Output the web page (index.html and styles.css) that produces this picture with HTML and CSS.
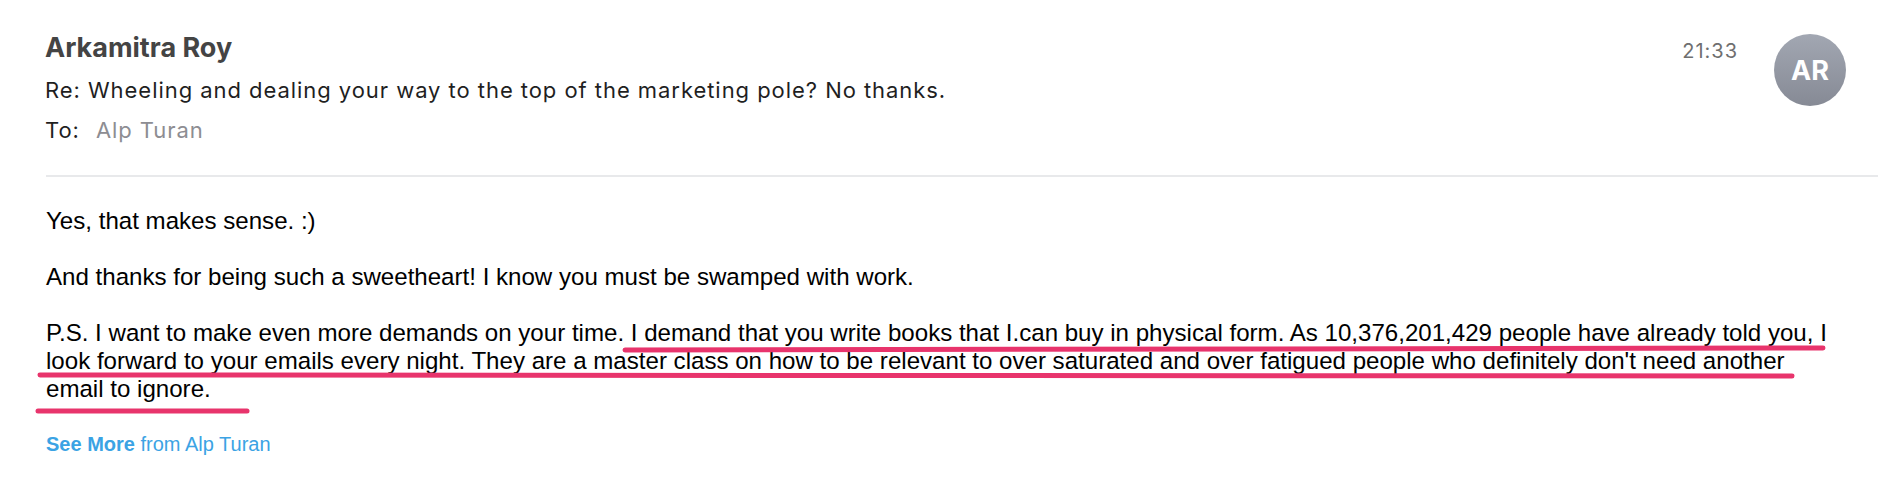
FILE: index.html
```html
<!DOCTYPE html>
<html>
<head>
<meta charset="utf-8">
<link rel="stylesheet" href="styles.css">
</head>
<body>
<div class="mail">
  <header class="head">
    <div class="meta">
      <div class="sender">Arkamitra Roy</div>
      <div class="subject">Re: Wheeling and dealing your way to the top of the marketing pole? No thanks.</div>
      <div class="to"><span class="to-label">To:</span><span class="to-name">Alp Turan</span></div>
    </div>
    <div class="side">
      <div class="time">21:33</div>
      <div class="avatar">AR</div>
    </div>
  </header>
  <div class="rule"></div>
  <div class="body">
    <p>Yes, that makes sense. :)</p>
    <p>And thanks for being such a sweetheart! I know you must be swamped with work.</p>
    <p>P.S. I want to make even more demands on your time. I demand that you write books that I.can buy in physical form. As 10,376,201,429 people have already told you, I look forward to your emails every night. They are a master class on how to be relevant to over saturated and over fatigued people who definitely don't need another email to ignore.</p>
    <div class="more"><span class="more-b">See More</span> from Alp Turan</div>
  </div>
  <svg class="marks" width="1878" height="488" viewBox="0 0 1878 488">
    <g stroke="#e8346c" stroke-width="5" stroke-linecap="round" fill="none">
      <line x1="625" y1="350" x2="1823" y2="348"/>
      <line x1="40" y1="375" x2="1792" y2="376"/>
      <line x1="38" y1="411" x2="247" y2="411"/>
    </g>
  </svg>
</div>
</body>
</html>
```
FILE: styles.css
```css
html, body {
  margin: 0;
  padding: 0;
  background: #ffffff;
}
.mail {
  position: relative;
  width: 1878px;
  height: 488px;
  overflow: hidden;
}
.head {
  display: flex;
  justify-content: space-between;
  align-items: flex-start;
  padding: 31px 32px 0 45px;
  height: 146px;
  box-sizing: border-box;
}
.meta {
  font-family: Inter, "Noto Sans", sans-serif;
}
.sender {
  font-size: 27px;
  font-weight: 700;
  color: #444444;
  line-height: 34px;
}
.subject {
  font-size: 22px;
  letter-spacing: 0.95px;
  color: #1f1f1f;
  line-height: 28px;
  margin-top: 11px;
}
.to {
  font-size: 22px;
  letter-spacing: 0.95px;
  color: #1f1f1f;
  line-height: 28px;
  margin-top: 12px;
}
.to-name {
  color: #8d8d92;
  margin-left: 16px;
}
.side {
  display: flex;
  align-items: flex-start;
  gap: 36px;
  font-family: Inter, "Noto Sans", sans-serif;
}
.time {
  font-size: 20px;
  letter-spacing: 1px;
  color: #6f6f6f;
  margin-top: 8px;
}
.avatar {
  width: 72px;
  height: 72px;
  margin-top: 3px;
  border-radius: 50%;
  background: linear-gradient(#a2a7b2, #868a95);
  color: #ffffff;
  font-size: 27px;
  font-weight: 700;
  display: flex;
  align-items: center;
  justify-content: center;
}
.rule {
  height: 2px;
  background: #e8e9eb;
  margin: 29px 0 0 46px;
}
.body {
  padding: 30px 0 0 46px;
  width: 1786px;
  font-family: "Liberation Sans", Arial, sans-serif;
  font-size: 24.1px;
  line-height: 28px;
  color: #000000;
}
.body p {
  margin: 0 0 28px 0;
}
.more {
  font-size: 20px;
  color: #3ba3e4;
  line-height: 28px;
  margin-top: -1px;
}
.more-b {
  font-weight: 700;
}
.marks {
  position: absolute;
  left: 0;
  top: 0;
  pointer-events: none;
}
```
